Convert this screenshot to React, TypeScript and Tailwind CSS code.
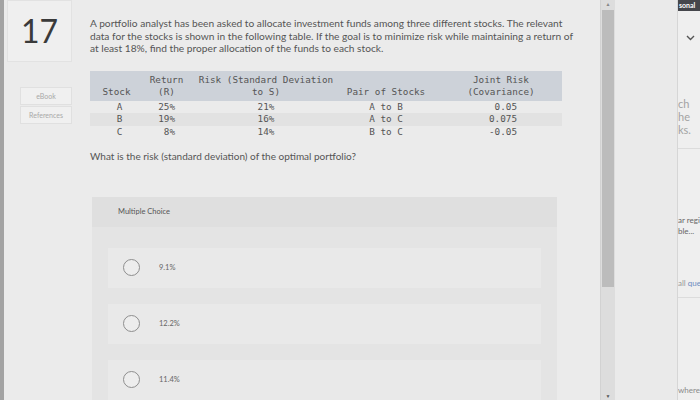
import React from "react";

const mono = { fontFamily: '"DejaVu Sans Mono", "Liberation Mono", monospace' };

const stocks = [
  { s: "A", r: "25%", risk: "21%", pair: "A to B", cov: "0.05" },
  { s: "B", r: "19%", risk: "16%", pair: "A to C", cov: "0.075" },
  { s: "C", r: "8%", risk: "14%", pair: "B to C", cov: "-0.05" },
];

const choices = ["9.1%", "12.2%", "11.4%"];

function Radio() {
  return <div className="w-[17px] h-[17px] rounded-full border border-[#8e8e8e] bg-[#ededed]" />;
}

export default function App() {
  return (
    <div
      className="w-[700px] h-[400px] overflow-hidden flex bg-[#ebebeb] text-[#4f4f4f]"
      style={{ fontFamily: 'Lato, "Open Sans", sans-serif' }}
    >
      {/* left edge */}
      <div className="w-[4px] bg-[#a3a3a3]" />

      {/* question number + links */}
      <div className="w-[82px] flex flex-col items-start pl-[3px]">
        <div className="w-[65px] h-[62px] border border-[#e2e2e2] bg-[#efefef] flex items-center justify-center text-[32px] leading-none text-[#3a3a3a]">
          17
        </div>
        <div className="mt-[25px] ml-[13px] w-[52px] flex flex-col gap-[1px]">
          <div className="h-[18px] border border-[#e0e0e0] bg-[#f0f0f0] flex items-center justify-center text-[7px] text-[#a8a8a8]">
            eBook
          </div>
          <div className="h-[18px] border border-[#e0e0e0] bg-[#f0f0f0] flex items-center justify-center text-[7px] text-[#a8a8a8]">
            References
          </div>
        </div>
      </div>

      {/* main content */}
      <div className="w-[514px] flex flex-col pl-[4px] pt-[17px]">
        <p className="whitespace-nowrap text-[10.2px] leading-[12.5px] text-[#555]">
          A portfolio analyst has been asked to allocate investment funds among three different stocks. The relevant
          <br />
          data for the stocks is shown in the following table. If the goal is to minimize risk while maintaining a return of
          <br />
          at least 18%, find the proper allocation of the funds to each stock.
        </p>

        <div className="mt-[16px] w-[472px] text-[9.3px] leading-[12.5px] text-[#555]" style={mono}>
          <div className="h-[30px] bg-[#cdd2d9] flex items-end pb-[2px]">
            <div className="w-[53px] text-center">Stock</div>
            <div className="w-[47px] text-center">
              Return
              <br />
              (R)
            </div>
            <div className="w-[152px] text-center">
              Risk (Standard Deviation
              <br />
              to S)
            </div>
            <div className="w-[88px] text-center">Pair of Stocks</div>
            <div className="w-[132px] pl-[10px] text-center">
              Joint Risk
              <br />
              (Covariance)
            </div>
          </div>
          {stocks.map((row, i) => (
            <div key={row.s} className={`h-[12.5px] flex ${i === 1 ? "bg-[#e2e2e2]" : ""}`}>
              <div className="w-[53px] text-center pl-[6px]">{row.s}</div>
              <div className="w-[47px] text-right pr-[15px]">{row.r}</div>
              <div className="w-[152px] text-center">{row.risk}</div>
              <div className="w-[88px] text-center">{row.pair}</div>
              <div className="w-[132px] text-right pr-[45px]">{row.cov}</div>
            </div>
          ))}
        </div>

        <p className="mt-[12px] text-[10px] leading-[12.5px] text-[#555]">
          What is the risk (standard deviation) of the optimal portfolio?
        </p>

        <div className="mt-[34px] ml-[2px] w-[465px] flex-1 bg-[#e4e4e4] flex flex-col">
          <div className="h-[30px] bg-[#dfdfdf] flex items-center pl-[26px] text-[7.5px] text-[#555]">
            Multiple Choice
          </div>
          <div className="flex flex-col gap-[16px] pt-[21px] px-[16px]">
            {choices.map((c) => (
              <div key={c} className="h-[40px] bg-[#e9e9e9] flex items-center pl-[15px] gap-[19px]">
                <Radio />
                <span className="text-[7.5px] text-[#666]">{c}</span>
              </div>
            ))}
          </div>
        </div>
      </div>

      {/* scrollbar */}
      <div className="w-[15px] bg-[#dddddd] flex flex-col items-center border-l border-[#d2d2d2]">
        <div className="h-[10px] flex items-center text-[5px] text-[#888]">▲</div>
        <div className="w-[12px] h-[277px] bg-[#bcbcbc]" />
        <div className="flex-1" />
        <div className="h-[6px] flex items-center text-[5px] text-[#555]">▼</div>
      </div>

      {/* blank area */}
      <div className="w-[62px] bg-[#eaeaea]" />

      {/* right sidebar, partly visible */}
      <div className="w-[23px] bg-[#efefef] border-l border-[#d6d6d6] flex flex-col overflow-hidden">
        <div className="h-[11px] bg-[#45464b] flex items-center pl-[1px] text-[7px] font-bold text-white whitespace-nowrap">
          sonal
        </div>
        <div className="flex justify-end pr-[5px] mt-[24px]">
          <svg width="9" height="6" viewBox="0 0 9 6">
            <path d="M1 1l3.5 3.5L8 1" stroke="#555" strokeWidth="1.4" fill="none" />
          </svg>
        </div>
        <div className="mt-[56px] text-[11px] leading-[13px] text-[#a3a3a3] whitespace-nowrap">
          <div>ch</div>
          <div>he</div>
          <div>ks.</div>
        </div>
        <div className="mt-[12px] h-[1px] bg-[#dcdcdc]" />
        <div className="mt-[66px] text-[8px] leading-[10.5px] text-[#666] whitespace-nowrap">
          <div>ar regi</div>
          <div>ble...</div>
        </div>
        <div className="mt-[41px] text-[8px] text-[#999] whitespace-nowrap">
          all <span className="text-[#6d8cc0]">que</span>
        </div>
        <div className="mt-[8px] h-[1px] bg-[#dcdcdc]" />
        <div className="mt-[86px] text-[8px] text-[#8a8a8a] whitespace-nowrap">where</div>
      </div>
    </div>
  );
}
